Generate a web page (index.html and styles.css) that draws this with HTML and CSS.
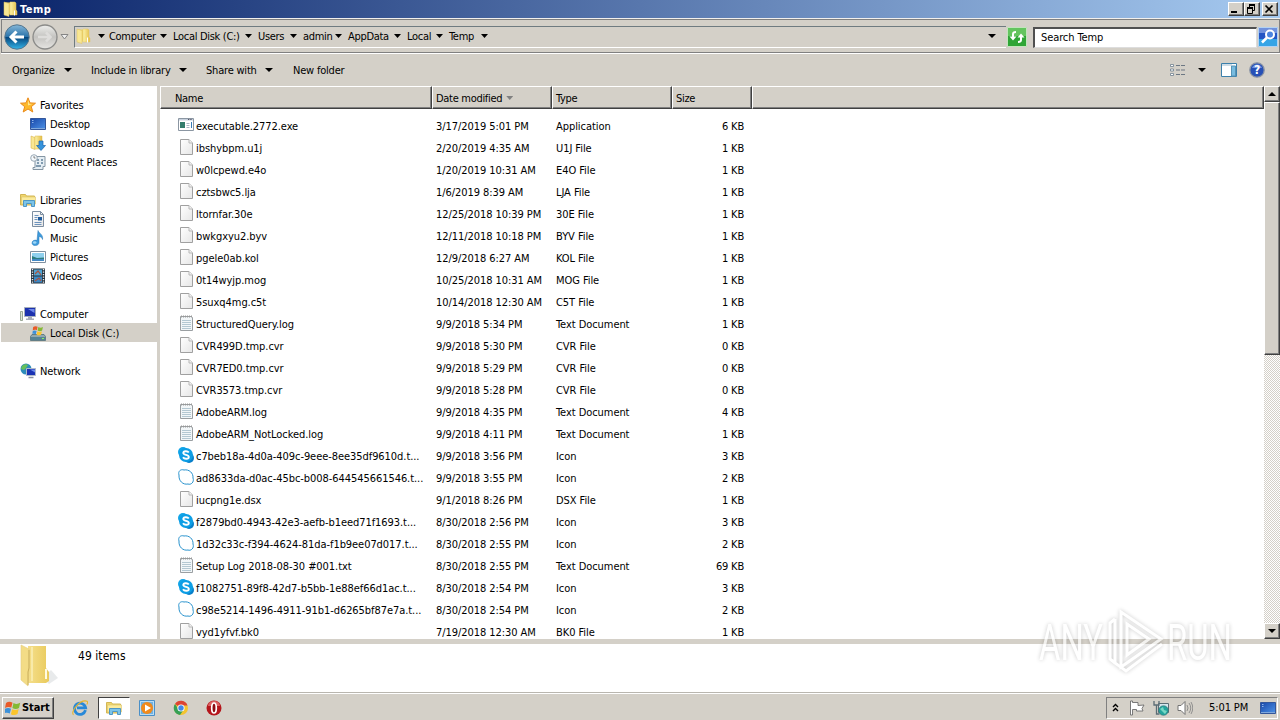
FILE: index.html
```
<!DOCTYPE html>
<html lang="en">
<head>
    <meta charset="UTF-8">
    <meta name="viewport" content="width=device-width, initial-scale=1.0">
    <title>Temp</title>
    <link rel="stylesheet" href="styles.css">
</head>
<body>

    <!-- Shared icons -->
    <svg class="sprite">
        <defs>
            <linearGradient id="gFolder" x1="0" x2="1"><stop offset="0" stop-color="#fdf3a8"/><stop offset="1" stop-color="#e3bd48"/></linearGradient>
            <linearGradient id="gBlue" x1="0" y1="0" x2="1" y2="1"><stop offset="0" stop-color="#1746a8"/><stop offset="1" stop-color="#4f94e8"/></linearGradient>
            <linearGradient id="gPage" x1="0" y1="0" x2="1" y2="1"><stop offset="0" stop-color="#fff"/><stop offset="1" stop-color="#e6e6e6"/></linearGradient>
            <linearGradient id="gBack" x1="0" y1="0" x2="0" y2="1"><stop offset="0" stop-color="#86b7d8"/><stop offset=".48" stop-color="#2b74ab"/><stop offset=".52" stop-color="#06477f"/><stop offset="1" stop-color="#35b5e8"/></linearGradient>
            <linearGradient id="gFwd" x1="0" y1="0" x2="0" y2="1"><stop offset="0" stop-color="#eeeeec"/><stop offset=".5" stop-color="#c4c3c0"/><stop offset="1" stop-color="#e6e5e2"/></linearGradient>
            <linearGradient id="gBig" x1="0" x2="1"><stop offset="0" stop-color="#f5df8c"/><stop offset="1" stop-color="#e9ca5c"/></linearGradient>
        </defs>
        <symbol id="folder" viewBox="0 0 16 16">
            <path d="M3 1.500h5v12H3z" fill="#f0d26a"/>
            <path d="M8 1h5l1 1v7l1 1v4H8z" fill="url(#gFolder)" stroke="#e2c566" stroke-width=".5"/>
            <path d="M2 1l5 1.500v13L2 14z" fill="#f9e793" stroke="#dfc05c" stroke-width=".5"/>
            <path d="M12.500 9.500v5" stroke="#fff" stroke-width="1"/>
        </symbol>
        <symbol id="star" viewBox="0 0 16 16">
            <path d="M8 .8l2 5.1 5.500.3-4.200 3.500 1.500 5.300L8 12l-4.800 3 1.500-5.300L.5 6.200 6 5.900z" fill="#fdb92c" stroke="#ea8a1a"/>
            <path d="M8 3l1.200 3.800 3 .2L8 8.500z" fill="#ffe995"/>
        </symbol>
        <symbol id="desktop" viewBox="0 0 16 16">
            <path d="M.5 2.500h15v11H.5z" fill="url(#gBlue)" stroke="#33569a"/>
            <path d="M1 12.500h14" stroke="#80a8dc"/>
            <path d="M2 4.500h1.500M2 6.500h1.500" stroke="#8fb4e8"/>
        </symbol>
        <symbol id="downloads" viewBox="0 0 16 16">
            <path d="M1 1l4 1.500v12L1 13z" fill="#f9e793" stroke="#d3ab3c" stroke-width=".5"/>
            <path d="M5 1h7v13H5z" fill="url(#gFolder)" stroke="#dcb94d" stroke-width=".5"/>
            <path d="M9 6h4v4.500h2.500L11 15.500 6.500 10.500H9z" fill="#3593dc" stroke="#1c66ae" stroke-width=".7"/>
        </symbol>
        <symbol id="recent" viewBox="0 0 16 16">
            <path d="M5 2.500h10v10h-2v3H3v-2h2z" fill="#e4edf3" stroke="#8495a3"/>
            <path d="M7 6h2M11 6h2M7 9h2M11 9h2M6 12h5" stroke="#60809b" stroke-width="1.300"/>
            <circle cx="4" cy="4" r="3.300" fill="#f5f9fc" stroke="#9aa9b5"/>
            <path d="M4 2v2h1.500" fill="none" stroke="#555" stroke-width=".7"/>
        </symbol>
        <symbol id="library" viewBox="0 0 16 16">
            <path d="M.5 2.500h5l1 1.500h8v9H.5z" fill="#f0d66c" stroke="#d3b655"/>
            <path d="M1.500 5h14v7h-14z" fill="#fbeb9c" stroke="#dcc26a" stroke-width=".6"/>
            <path d="M3.500 8.500h11v6h-3v-3h-5v3h-3z" fill="#7cc4e8" stroke="#4f97c4"/>
        </symbol>
        <symbol id="document" viewBox="0 0 16 16">
            <path d="M2.500.5h8l3 3v12h-11z" fill="url(#gPage)" stroke="#7d8ea1"/>
            <path d="M10.500.5v3h3" fill="none" stroke="#7d8ea1"/>
            <path d="M4.500 4.500h4M4.500 6.500h3M4.500 8.500h3M4.500 11.500h7M4.500 13.500h7" stroke="#6d93bd"/>
            <path d="M8 6h4v3.500H8z" fill="#1f5b9c"/>
        </symbol>
        <symbol id="music" viewBox="0 0 16 16">
            <path d="M8 .5c1 3 5.500 4 4.500 9-.5-2-2-3-3.500-3v6c0 4-7 4-7 .5 0-2.500 3-3.500 5-2.500z" fill="#3d9bdc" stroke="#2675b4" stroke-width=".5"/>
            <ellipse cx="4.700" cy="12.500" rx="1.800" ry="1.300" fill="#9ed6f7"/>
        </symbol>
        <symbol id="picture" viewBox="0 0 16 16">
            <path d="M.5 2.500h15v11H.5z" fill="#fff" stroke="#8090a0"/>
            <path d="M2 4h12v8H2z" fill="#8fd0ee"/>
            <path d="M2 7l5 2 7-.5V12H2z" fill="#2c7e80"/>
            <path d="M2 10h12v2H2z" fill="#4389c5"/>
        </symbol>
        <symbol id="video" viewBox="0 0 16 16">
            <path d="M1 .5h14v15H1z" fill="#26323d"/>
            <path d="M4 1.500h8v6H4z" fill="#4fa3d3"/><path d="M4 8.500h8v6H4z" fill="#3c88c4"/>
            <path d="M5 6l3-3 3 4M5 13l4-3 2 3" stroke="#ab5440" fill="none" stroke-width="1.200"/>
            <path d="M2.500 1v14M13.500 1v14" stroke="#e8eef3" stroke-width="1.400" stroke-dasharray="1.300 1.200"/>
        </symbol>
        <symbol id="computer" viewBox="0 0 16 16">
            <path d="M.5 5.500h2v9h-2z" fill="#dfe5d9" stroke="#879682" stroke-width=".8"/>
            <path d="M4.500 1.500h11v9h-11z" fill="#1c31ae" stroke="#a5aebc"/>
            <path d="M8 3h6.500v4z" fill="#6d88ea"/>
            <path d="M8 11h4v1.500h2V14H6v-1.500h2z" fill="#a7acb9"/>
        </symbol>
        <symbol id="flag" viewBox="0 0 16 16">
            <path d="M1 3c2-1.500 4.500-1.500 6.500-.3L6.300 7.600C4.300 6.500 2 6.700 0 8z" fill="#e95b28"/>
            <path d="M8.500 3c2 1.200 4.500 1.200 6.700-.2L14 8c-2 1.300-4.600 1.200-6.600 0z" fill="#84b934"/>
            <path d="M-.2 9c2-1.400 4.300-1.400 6.200-.3L4.800 13.500c-2-1.100-4.200-1-6 .2z" fill="#3c91d9"/>
            <path d="M7.100 9.200c2 1.100 4.500 1.100 6.600-.1l-1.200 5c-2.200 1.300-4.600 1.200-6.600.1z" fill="#fbc52c"/>
        </symbol>
        <symbol id="disk" viewBox="0 0 16 16">
            <path d="M2 9.500h12l1.500 2v4H.5v-4z" fill="#91a8ae" stroke="#4e6e78" stroke-width=".8"/>
            <path d="M1 12h14v3H1z" fill="#568394"/>
            <path d="M12 13.500h2" stroke="#8bf65e"/>
            <use href="#flag" x="2.500" y="0" width="11" height="11"/>
        </symbol>
        <symbol id="network" viewBox="0 0 16 16">
            <circle cx="6" cy="6" r="5.500" fill="#2d8cba"/>
            <path d="M2 3c2-2 5-2 6-1L6 5 4 7 1 6zM6 8l3 1-2 2z" fill="#65c05a"/>
            <path d="M6.500 5.500h9v7h-9z" fill="#1b33b4" stroke="#b0bac9"/>
            <path d="M10 6.500h5v3z" fill="#6c8cec"/>
            <path d="M8.500 14.500h5" stroke="#8b93a2" stroke-width="1.500"/>
        </symbol>
        <symbol id="file" viewBox="0 0 16 16">
            <path d="M2.500.5h8.500l3.500 3.500v11.500h-12z" fill="url(#gPage)" stroke="#a0a0a0"/>
            <path d="M11 .5V4h3.500" fill="#f2f2f2" stroke="#b8b8b8"/>
        </symbol>
        <symbol id="text" viewBox="0 0 16 16">
            <path d="M2.500 1.500h11l1 1v13h-12z" fill="#f2f6f8" stroke="#9a9fa2"/>
            <path d="M4 5.500h9M4 7.500h9M4 9.500h9M4 11.500h9M4 13.500h9" stroke="#b4c8d2"/>
            <path d="M3 1.500h11" stroke="#999" stroke-dasharray="1 1" stroke-width="2"/>
        </symbol>
        <symbol id="exe" viewBox="0 0 16 16">
            <path d="M.5 1.500h15v12H.5z" fill="#fff" stroke="#8b96a2"/>
            <path d="M1 2h14v1.500H1z" fill="#c6d0dd"/>
            <path d="M10 2.500h4" stroke="#556" stroke-dasharray="1 .7"/>
            <path d="M2 5h5v6H2z" fill="#327c6c"/>
            <path d="M8.500 6.500h3M8.500 8.500h3M8.500 10.500h3" stroke="#a8b6c5"/>
            <path d="M13.500 5v6" stroke="#377cb5"/>
        </symbol>
        <symbol id="skype" viewBox="0 0 16 16">
            <circle cx="5" cy="5" r="5" fill="#12a5e8"/><circle cx="11" cy="11" r="5" fill="#087fca"/><circle cx="8" cy="8" r="7" fill="#0d9ee5"/>
            <path d="M10.800 5.500C9.500 3.600 5.300 3.800 5.300 6c0 2.300 5.500 1.400 5.500 3.900 0 2.400-4.500 2.500-5.800.4" fill="none" stroke="#fff" stroke-width="1.900"/>
        </symbol>
        <symbol id="skypeline" viewBox="0 0 16 16">
            <path d="M1 6C-.2 2.500 2.500-.2 6 1c5-1 9.500 3 9 8 1.500 4-2 7.200-5 6C5 16 .5 12 1 6z" fill="#fff" stroke="#2892cd"/>
        </symbol>
        <symbol id="ie" viewBox="0 0 16 16">
            <path d="M13.500 10.200A5.600 5.600 0 1 1 13.600 7.800H5" fill="none" stroke="#2889d8" stroke-width="2.800"/>
            <path d="M1.500 14.800C-2 12 8-1 15 1.200c1 .8.500 2.200-.2 3.300" fill="none" stroke="#e6b52d" stroke-width="1.100"/>
        </symbol>
    </svg>

    <div class="titlebar">
        <svg class="icon"><use href="#folder"/></svg>
        <span class="title">Temp</span>
        <div class="window-buttons">
            <button class="win-btn"><svg viewBox="0 0 12 10"><path d="M2 8h6" stroke="#000" stroke-width="2"/></svg></button>
            <button class="win-btn"><svg viewBox="0 0 12 10"><path d="M4 1h6M2 4h6" stroke="#000" stroke-width="2"/><path d="M4.500 1v3M9.500 1v5.500H8M2.500 4v5.500h5V4" fill="none" stroke="#000"/></svg></button>
            <button class="win-btn close"><svg viewBox="0 0 12 10"><path d="M2.500 1.500l7 7M9.500 1.500l-7 7" stroke="#000" stroke-width="1.700"/></svg></button>
        </div>
    </div>

    <div class="addressbar">
        <svg class="round back" viewBox="0 0 26 26"><circle cx="13" cy="13" r="12.200" fill="url(#gBack)" stroke="#55758c"/><path d="M20 13H8M12.500 7.500L7 13l5.500 5.500" fill="none" stroke="#fff" stroke-width="3"/></svg>
        <svg class="round" viewBox="0 0 26 26"><circle cx="13" cy="13" r="12" fill="url(#gFwd)" stroke="#8b8b89" stroke-width="1.300"/><path d="M6 13h12M14 8.500l4.500 4.500-4.500 4.500" fill="none" stroke="#dedddb" stroke-width="2.500"/></svg>
        <svg class="history" viewBox="0 0 9 6"><path d="M1 .5h7L4.500 5z" fill="#eee" stroke="#858585"/></svg>
        <div class="path">
            <svg class="icon"><use href="#folder"/></svg>
            <span class="arrow"></span>
            <span class="crumb c1">Computer</span><span class="arrow"></span>
            <span class="crumb c2">Local Disk (C:)</span><span class="arrow"></span>
            <span class="crumb c3">Users</span><span class="arrow"></span>
            <span class="crumb c4">admin</span><span class="arrow"></span>
            <span class="crumb c5">AppData</span><span class="arrow"></span>
            <span class="crumb c6">Local</span><span class="arrow"></span>
            <span class="crumb c7">Temp</span><span class="arrow"></span>
            <span class="arrow big path-drop"></span>
        </div>
        <svg class="refresh" viewBox="0 0 20 20"><path d="M.5.500h19v19H.5z" fill="#2fa536" stroke="#c2e5bc"/><path d="M1 1h18v8H1z" fill="#64c45f"/><path d="M6 12V7q0-2 3-2M14 8v5q0 2-3 2" fill="none" stroke="#fff" stroke-width="2"/><path d="M2.500 9.500h7L6 13.500zM10.500 10.500h7L14 6.500z" fill="#fff"/></svg>
        <div class="search">Search Temp</div>
        <svg class="search-btn" viewBox="0 0 20 20"><path d="M.5.500h19v19H.5z" fill="#2455c4" stroke="#b3d2f2"/><path d="M1 12h18v7H1z" fill="#35a4e6"/><path d="M1 1h18v5H1z" fill="#7191dc"/><circle cx="12" cy="7.500" r="4" fill="#4c84df" stroke="#fff" stroke-width="2"/><path d="M9 10.500l-5 5" stroke="#fff" stroke-width="2.500"/></svg>
    </div>

    <div class="toolbar">
        <span class="tool t1">Organize<i class="arrow big"></i></span>
        <span class="tool t2">Include in library<i class="arrow big"></i></span>
        <span class="tool t3">Share with<i class="arrow big"></i></span>
        <span class="tool">New folder</span>
        <div class="tool-right">
            <svg width="16" height="14" viewBox="0 0 16 14"><path d="M.5 1.500h3v2h-3zM.5 6h3v2h-3zM.5 10.500h3v2h-3z" fill="#fff" stroke="#6d7d8d" stroke-width=".8"/><path d="M6 2.500h4M11 2.500h4M6 7h4M11 7h4M6 11.500h4M11 11.500h4" stroke="#6c7783"/></svg>
            <i class="arrow big"></i>
            <svg width="16" height="14" viewBox="0 0 16 14"><path d="M.5.500h15v13H.5z" fill="#fff" stroke="#3c80ab"/><path d="M1 2h10" stroke="#9cb9cd"/><path d="M10.500 3h4v10h-4z" fill="#78bce0" stroke="#5593b6"/></svg>
            <svg width="16" height="16" viewBox="0 0 16 16"><circle cx="8" cy="8" r="7.200" fill="#2750b6" stroke="#8791a4" stroke-width="1.300"/><path d="M3 6a5.300 5.300 0 0 1 10 0z" fill="#6f91df"/><text class="help" x="8" y="12.200" text-anchor="middle">?</text></svg>
        </div>
    </div>

    <div class="main">
        <div class="nav" id="nav"></div>
        <div class="files">
            <div class="file-area">
                <div class="head">
                    <div class="cell name">Name</div>
                    <div class="cell date">Date modified<i class="arrow sort"></i></div>
                    <div class="cell type">Type</div>
                    <div class="cell size">Size</div>
                    <div class="cell rest"></div>
                </div>
                <div class="rows" id="rows"></div>
            </div>
            <div class="scrollbar">
                <div class="scroll-btn"><i class="arrow up"></i></div>
                <div class="thumb"></div>
                <div class="track"></div>
                <div class="scroll-btn"><i class="arrow big"></i></div>
            </div>
        </div>
    </div>

    <div class="details">
        <svg class="big-folder" viewBox="0 0 40 44">
            <path d="M24 34l8-8 7 8-9 6z" fill="#d9dcde" opacity=".6"/>
            <path d="M9 2h18v22l3 4v9l-3 2H9z" fill="url(#gBig)"/>
            <path d="M12 3h2v34h-2z" fill="#f8eaa9"/>
            <path d="M2 1l8 4v21l-1 16-7-6z" fill="#f3dc86" stroke="#e4cd80" stroke-width=".6"/>
            <path d="M10 6v18l-1 4v13" fill="none" stroke="#cbb05c"/>
            <path d="M27 25v10" stroke="#fffbe3" stroke-width="2"/>
        </svg>
        <span>49 items</span>
    </div>

    <div class="taskbar">
        <button class="start"><svg class="icon"><use href="#flag"/></svg>Start</button>
        <div class="task"><svg class="icon"><use href="#ie"/></svg></div>
        <div class="task active"><svg class="icon"><use href="#library"/></svg></div>
        <div class="task"><svg class="icon" viewBox="0 0 16 16"><path d="M.5.500h15v15H.5z" fill="#b7dcf5" stroke="#4a8fc7"/><path d="M2 2h12v12H2z" fill="#6fb1e2"/><circle cx="8" cy="8" r="6" fill="#f08a1c"/><path d="M6 4.500v7L12 8z" fill="#fff"/></svg></div>
        <div class="task"><svg class="icon" viewBox="0 0 16 16"><circle cx="8" cy="8" r="7" fill="#f4c430"/><path d="M8 8L2 4a7 7 0 0 1 12.500 1.500H8z" fill="#dc4435"/><path d="M2 4a7 7 0 0 0 5 11l3.500-5L6 10z" fill="#36a055"/><circle cx="8" cy="8" r="3.600" fill="#fff"/><circle cx="8" cy="8" r="2.700" fill="#4387e8"/></svg></div>
        <div class="task"><svg class="icon" viewBox="0 0 16 16"><circle cx="8" cy="8" r="7.500" fill="#b5161c"/><path d="M2 6a6 5 0 0 1 12 0z" fill="#dc6262"/><ellipse cx="8" cy="8" rx="2.300" ry="5" fill="#8c0d12" stroke="#fff" stroke-width="1.700"/></svg></div>
        <div class="tray">
            <svg class="chevron" viewBox="0 0 7 9"><path d="M1 4l2.500-2.500L6 4M1 8l2.500-2.500L6 8" fill="none" stroke="#000" stroke-width="1.400"/></svg>
            <svg class="icon" viewBox="0 0 16 16"><path d="M1.500 1v14h2V9.500h4V11H14l-1-2.500 2-3.500-6 .5V2.500H3.500V1z" fill="#fff" stroke="#6c6c6c" stroke-width=".9"/></svg>
            <svg class="icon net" viewBox="0 0 16 16"><path d="M5.500 3.500h10v9h-10z" fill="#d5e7ec" stroke="#5b6c75"/><path d="M1 1v4h5V1M3.500 5v9h3" fill="none" stroke="#5b6c75" stroke-width="1.300"/><circle cx="10.500" cy="10.500" r="4.800" fill="#23a59d" stroke="#396d74" stroke-width=".6"/><path d="M7 9l3-2 1 3 3 1-2 3z" fill="#78d7c4"/></svg>
            <svg class="icon" viewBox="0 0 16 16"><path d="M1 5.500h3L8 1.500v13L4 10.500H1z" fill="#fff" stroke="#737373"/><path d="M10 5q2 3 0 6M12 3q3.500 5 0 10M14 2q3.500 6 0 12" fill="none" stroke="#888" stroke-width=".9"/></svg>
            <span class="clock">5:01 PM</span>
            <svg class="icon"><use href="#desktop"/></svg>
        </div>
    </div>

    <svg class="watermark" viewBox="0 0 216 80">
        <text x="4" y="53" textLength="64" lengthAdjust="spacingAndGlyphs">ANY</text>
        <text x="132" y="53" textLength="65" lengthAdjust="spacingAndGlyphs">RUN</text>
        <path d="M86 5l40 27-40 28z"/>
        <path d="M92 17l22 15-22 16z"/>
        <path d="M80 12l-5 4v36l5 4M80 12v44l11 8 36-27"/>
    </svg>

    <script src="script.js"></script>
</body>
</html>
```
FILE: styles.css
```
* {
    box-sizing: border-box;
}
body {
    margin: 0;
    width: 1280px;
    height: 720px;
    overflow: hidden;
    display: flex;
    flex-direction: column;
    position: relative;
    background: #d4d0c8;
    color: #000;
    font-family: "DejaVu Sans Condensed", "DejaVu Sans", sans-serif;
    font-stretch: condensed;
    font-size: 11px;
    letter-spacing: -0.3px;
    white-space: nowrap;
}
.sprite {
    position: absolute;
    width: 0;
    height: 0;
}
.icon {
    width: 16px;
    height: 16px;
    flex: none;
}
.arrow {
    display: inline-block;
    flex: none;
    width: 7px;
    height: 4px;
    background: #000;
    clip-path: polygon(0 0, 100% 0, 50% 100%);
}
.arrow.big {
    width: 8px;
    height: 4px;
}
.arrow.up {
    width: 8px;
    height: 4px;
    clip-path: polygon(50% 0, 100% 100%, 0 100%);
}

/* Title bar */
.titlebar {
    height: 18px;
    flex: none;
    display: flex;
    align-items: center;
    padding: 0 2px;
    background: linear-gradient(to right, #0a246a, #a6caf0);
}
.title {
    margin-left: 2px;
    color: #fff;
    font-weight: bold;
    letter-spacing: 0.5px;
}
.window-buttons {
    margin-left: auto;
    display: flex;
}
.win-btn {
    width: 16px;
    height: 14px;
    padding: 0;
    background: #d4d0c8;
    border: 1px solid;
    border-color: #fff #404040 #404040 #fff;
    box-shadow: inset -1px -1px #808080;
}
.win-btn svg {
    display: block;
    width: 12px;
    height: 10px;
}
.win-btn.close {
    margin-left: 2px;
}

/* Address bar */
.addressbar {
    height: 36px;
    flex: none;
    display: flex;
    align-items: center;
    margin-left: 1px;
    padding: 2px 2px 0 3px;
    border-top: 1px solid #f2f0ed;
    border-bottom: 1px solid #fff;
    box-shadow: inset 1px 1px #808080, inset -1px -1px #808080;
}
.round {
    width: 26px;
    height: 26px;
    margin-right: 2px;
}
.history {
    width: 9px;
    height: 6px;
}
.path {
    width: 932px;
    height: 22px;
    margin-left: 5px;
    padding-bottom: 2px;
    display: flex;
    align-items: center;
    border: 1px solid #6f7b80;
    border-right: 0;
    border-bottom-color: #fff;
}
.path > .arrow {
    margin-left: 7px;
}
.crumb {
    margin-left: 4px;
}
.c1 { width: 46px; }
.c2 { width: 67px; }
.c3 { width: 27px; }
.c4 { width: 27px; }
.c5 { width: 41px; }
.c6 { width: 24px; }
.c7 { width: 27px; }
.path .crumb + .arrow {
    margin: 0 2px 0 5px;
}
.path > .path-drop {
    margin-left: auto;
    margin-right: 10px;
}
.refresh,
.search-btn {
    width: 20px;
    height: 20px;
    flex: none;
}
.refresh {
    margin-left: 1px;
}
.search {
    flex: 1;
    height: 21px;
    margin: 0 1px 0 6px;
    padding: 1px 6px;
    line-height: 15px;
    letter-spacing: -0.1px;
    background: #fff;
    border: 2px solid #505050;
    border-right: 1px solid #ddd;
    border-bottom: 1px solid #ddd;
}

/* Toolbar */
.toolbar {
    height: 32px;
    flex: none;
    display: flex;
    align-items: center;
    padding: 0 15px 0 12px;
    letter-spacing: -0.2px;
}
.tool {
    display: flex;
    align-items: center;
    justify-content: space-between;
}
.t1 { width: 60px; margin-right: 19px; }
.t2 { width: 96px; margin-right: 19px; }
.t3 { width: 67px; margin-right: 20px; }
.tool-right {
    margin-left: auto;
    display: flex;
    align-items: center;
}
.tool-right .arrow {
    margin: 0 15px 0 12px;
}
.tool-right svg + svg {
    margin-left: 12px;
}
.help {
    fill: #fff;
    font-size: 12px;
    font-weight: bold;
}

/* Navigation pane */
.main {
    height: 553px;
    flex: none;
    display: flex;
    letter-spacing: -0.06px;
}
.nav {
    width: 160px;
    padding-top: 9px;
    background: #fff;
    border-right: 3px solid #d4d0c8;
    letter-spacing: -0.12px;
}
.nav-item {
    height: 19px;
    margin-left: 1px;
    padding-left: 19px;
    display: flex;
    align-items: center;
    gap: 4px;
}
.nav-item span {
    padding-top: 2px;
}
.nav-item.child {
    padding-left: 29px;
}
.nav-item.selected {
    background: #d4d0c8;
}
.nav-gap {
    height: 19px;
}

/* File list */
.files {
    flex: 1;
    display: flex;
    background: #fff;
}
.file-area {
    flex: 1;
    overflow: hidden;
}
.head {
    height: 23px;
    display: flex;
    letter-spacing: -0.3px;
}
.head .cell {
    padding: 1px 3px 0;
    display: flex;
    align-items: center;
    background: #d4d0c8;
    border: 1px solid;
    border-color: #fff #404040 #404040 #fff;
    box-shadow: inset -1px -1px #808080;
}
.head .name {
    padding-left: 14px;
}
.head .rest {
    flex: 1;
}
.name { width: 272px; }
.date { width: 120px; }
.type { width: 120px; }
.size { width: 80px; }
.arrow.sort {
    margin-left: 4px;
    background: #808080;
}
.rows {
    height: 530px;
    padding-top: 6px;
    overflow: hidden;
}
.row {
    height: 22px;
    display: flex;
    align-items: center;
}
.row .name {
    display: flex;
    align-items: center;
    padding-left: 18px;
    gap: 2px;
}
.row .icon {
    margin-top: -2px;
}
.row .date,
.row .type {
    padding-left: 4px;
}
.row .size {
    padding-right: 8px;
    text-align: right;
    letter-spacing: -0.2px;
}

/* Scrollbar */
.scrollbar {
    width: 16px;
    display: flex;
    flex-direction: column;
}
.scroll-btn,
.thumb {
    background: #d4d0c8;
    border: 1px solid;
    border-color: #fff #404040 #404040 #fff;
    box-shadow: inset -1px -1px #808080;
}
.scroll-btn {
    height: 16px;
    display: flex;
    align-items: center;
    justify-content: center;
}
.thumb {
    height: 253px;
}
.track {
    flex: 1;
    background: repeating-conic-gradient(#d4d0c8 0 25%, #fff 0 50%) 0 0 / 2px 2px;
}

/* Details pane */
.details {
    height: 53px;
    flex: none;
    display: flex;
    padding-left: 19px;
    background: #fff;
    border-top: 5px solid #d4d0c8;
}
.big-folder {
    width: 40px;
    height: 44px;
}
.details span {
    margin: 5px 0 0 19px;
    font-size: 12px;
    letter-spacing: 0.05px;
}

/* Taskbar */
.taskbar {
    height: 28px;
    flex: none;
    display: flex;
    align-items: center;
    padding: 2px 2px 0;
    border-top: 1px solid #b9b6af;
    box-shadow: inset 0 1px #fff;
}
.start {
    width: 52px;
    height: 22px;
    margin-right: 10px;
    padding: 0 2px;
    display: flex;
    align-items: center;
    gap: 1px;
    background: #d4d0c8;
    border: 1px solid;
    border-color: #fff #404040 #404040 #fff;
    box-shadow: inset -1px -1px #808080;
    font: bold 11px "DejaVu Sans Condensed", "DejaVu Sans", sans-serif;
    letter-spacing: -0.1px;
}
.task {
    width: 32px;
    height: 22px;
    margin-right: 1.5px;
    display: flex;
    align-items: center;
    justify-content: center;
}
.task.active {
    background: #fff;
    border: 1px solid;
    border-color: #404040 #fff #fff #404040;
}
.task .icon {
    margin-top: 1px;
}
.tray {
    width: 172px;
    height: 22px;
    margin-left: auto;
    padding: 0 1px 0 5px;
    display: flex;
    align-items: center;
    gap: 8px;
    border: 1px solid;
    border-color: #808080 #fff #fff #808080;
}
.chevron {
    width: 7px;
    height: 9px;
    margin-right: 2px;
}
.clock {
    width: 40px;
    margin: 0 3px 0 8px;
    letter-spacing: -0.1px;
}

/* Watermark over the corner */
.watermark {
    position: absolute;
    left: 1035px;
    top: 607px;
    width: 216px;
    height: 80px;
    filter: drop-shadow(0 0 2px rgba(0, 0, 0, 0.3));
    opacity: 0.7;
}
.watermark text {
    font: 50px Roboto, sans-serif;
    letter-spacing: 0;
    fill: #fff;
}
.watermark path {
    fill: none;
    stroke: #fff;
    stroke-width: 3;
}
```
FILE: script.js
```
const navItems = [
    ['star', 'Favorites'],
    ['desktop', 'Desktop', 'child'],
    ['downloads', 'Downloads', 'child'],
    ['recent', 'Recent Places', 'child'],
    null,
    ['library', 'Libraries'],
    ['document', 'Documents', 'child'],
    ['music', 'Music', 'child'],
    ['picture', 'Pictures', 'child'],
    ['video', 'Videos', 'child'],
    null,
    ['computer', 'Computer'],
    ['disk', 'Local Disk (C:)', 'child selected'],
    null,
    ['network', 'Network']
];

const files = [
    ['exe', 'executable.2772.exe', '3/17/2019 5:01 PM', 'Application', '6 KB'],
    ['file', 'ibshybpm.u1j', '2/20/2019 4:35 AM', 'U1J File', '1 KB'],
    ['file', 'w0lcpewd.e4o', '1/20/2019 10:31 AM', 'E4O File', '1 KB'],
    ['file', 'cztsbwc5.lja', '1/6/2019 8:39 AM', 'LJA File', '1 KB'],
    ['file', 'ltornfar.30e', '12/25/2018 10:39 PM', '30E File', '1 KB'],
    ['file', 'bwkgxyu2.byv', '12/11/2018 10:18 PM', 'BYV File', '1 KB'],
    ['file', 'pgele0ab.kol', '12/9/2018 6:27 AM', 'KOL File', '1 KB'],
    ['file', '0t14wyjp.mog', '10/25/2018 10:31 AM', 'MOG File', '1 KB'],
    ['file', '5suxq4mg.c5t', '10/14/2018 12:30 AM', 'C5T File', '1 KB'],
    ['text', 'StructuredQuery.log', '9/9/2018 5:34 PM', 'Text Document', '1 KB'],
    ['file', 'CVR499D.tmp.cvr', '9/9/2018 5:30 PM', 'CVR File', '0 KB'],
    ['file', 'CVR7ED0.tmp.cvr', '9/9/2018 5:29 PM', 'CVR File', '0 KB'],
    ['file', 'CVR3573.tmp.cvr', '9/9/2018 5:28 PM', 'CVR File', '0 KB'],
    ['text', 'AdobeARM.log', '9/9/2018 4:35 PM', 'Text Document', '4 KB'],
    ['text', 'AdobeARM_NotLocked.log', '9/9/2018 4:11 PM', 'Text Document', '1 KB'],
    ['skype', 'c7beb18a-4d0a-409c-9eee-8ee35df9610d.t...', '9/9/2018 3:56 PM', 'Icon', '3 KB'],
    ['skypeline', 'ad8633da-d0ac-45bc-b008-644545661546.t...', '9/9/2018 3:55 PM', 'Icon', '2 KB'],
    ['file', 'iucpng1e.dsx', '9/1/2018 8:26 PM', 'DSX File', '1 KB'],
    ['skype', 'f2879bd0-4943-42e3-aefb-b1eed71f1693.t...', '8/30/2018 2:56 PM', 'Icon', '3 KB'],
    ['skypeline', '1d32c33c-f394-4624-81da-f1b9ee07d017.t...', '8/30/2018 2:55 PM', 'Icon', '2 KB'],
    ['text', 'Setup Log 2018-08-30 #001.txt', '8/30/2018 2:55 PM', 'Text Document', '69 KB'],
    ['skype', 'f1082751-89f8-42d7-b5bb-1e88ef66d1ac.t...', '8/30/2018 2:54 PM', 'Icon', '3 KB'],
    ['skypeline', 'c98e5214-1496-4911-91b1-d6265bf87e7a.t...', '8/30/2018 2:54 PM', 'Icon', '2 KB'],
    ['file', 'vyd1yfvf.bk0', '7/19/2018 12:30 AM', 'BK0 File', '1 KB']
];

function icon(name) {
    return '<svg class="icon"><use href="#' + name + '"/></svg>';
}

document.getElementById('nav').innerHTML = navItems.map(function (item) {
    if (!item) {
        return '<div class="nav-gap"></div>';
    }
    return '<div class="nav-item ' + (item[2] || '') + '">' + icon(item[0]) + '<span>' + item[1] + '</span></div>';
}).join('');

document.getElementById('rows').innerHTML = files.map(function (f) {
    return '<div class="row">' +
        '<div class="name">' + icon(f[0]) + '<span>' + f[1] + '</span></div>' +
        '<div class="date">' + f[2] + '</div>' +
        '<div class="type">' + f[3] + '</div>' +
        '<div class="size">' + f[4] + '</div>' +
        '</div>';
}).join('');
```
